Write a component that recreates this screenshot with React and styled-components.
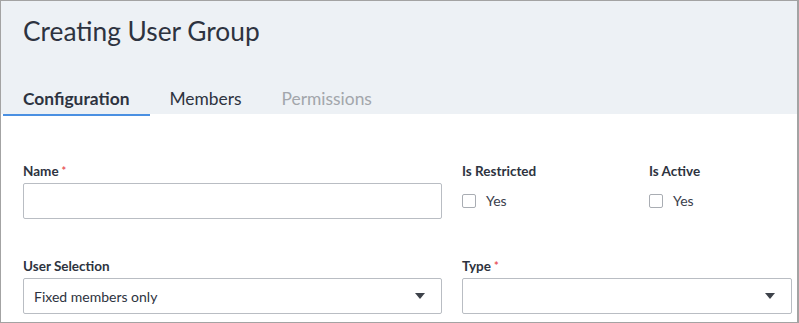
import React from 'react'
import styled, {createGlobalStyle} from 'styled-components'

const GlobalStyle = createGlobalStyle`
  html, body {
    margin: 0;
    padding: 0;
    background: #ffffff;
  }
  body {
    font-family: Lato, "Open Sans", sans-serif;
    color: #2d3340;
  }
`

const App = () => {
    return (
        <Frame>
            <GlobalStyle/>
            <Header>
                <Title>Creating User Group</Title>
                <Tabs>
                    <Tab active>Configuration</Tab>
                    <Tab>Members</Tab>
                    <Tab disabled>Permissions</Tab>
                </Tabs>
            </Header>
            <Form>
                <Field>
                    <Label>Name<Required>*</Required></Label>
                    <Input type="text"/>
                </Field>
                <Field>
                    <Label>Is Restricted</Label>
                    <CheckRow>
                        <Box/>
                        <span>Yes</span>
                    </CheckRow>
                </Field>
                <Field>
                    <Label>Is Active</Label>
                    <CheckRow>
                        <Box/>
                        <span>Yes</span>
                    </CheckRow>
                </Field>
                <Field>
                    <Label>User Selection</Label>
                    <Select>
                        <span>Fixed members only</span>
                        <Caret/>
                    </Select>
                </Field>
                <Field span={2}>
                    <Label>Type<Required>*</Required></Label>
                    <Select>
                        <span/>
                        <Caret/>
                    </Select>
                </Field>
            </Form>
        </Frame>
    )
}

export default App

const Frame = styled.div`
  box-sizing: border-box;
  width: 799px;
  height: 323px;
  border: 1px solid #a3a3a3;
  border-right-width: 2px;
  overflow: hidden;
  background: #ffffff;
`

const Header = styled.div`
  background: #edf1f5;
  padding: 0 0 0 2px;
  height: 113px;
  box-sizing: border-box;
  display: flex;
  flex-direction: column;
`

const Title = styled.h1`
  margin: 0;
  padding: 14px 0 0 20px;
  font-size: 26.3px;
  font-weight: 400;
  line-height: 32px;
  color: #2d3340;
`

const Tabs = styled.div`
  display: flex;
  margin-top: auto;
`

const Tab = styled.div`
  padding: 0 21px 0 20px;
  height: 26px;
  font-size: 17.4px;
  line-height: 21px;
  font-weight: ${props => props.active ? 700 : 400};
  color: ${props => props.disabled ? '#a2a6ab' : '#2d3340'};
  border-bottom: 2px solid ${props => props.active ? '#4a90e2' : 'transparent'};
  margin-bottom: -2px;
  margin-right: -1px;
  position: relative;
`

const Form = styled.div`
  display: grid;
  grid-template-columns: 419px 167px 143px;
  column-gap: 20px;
  row-gap: 39px;
  padding: 49px 0 0 22px;
`

const Field = styled.div`
  display: flex;
  flex-direction: column;
  grid-column: span ${props => props.span || 1};
`

const Label = styled.div`
  font-size: 13.5px;
  font-weight: 700;
  line-height: 16px;
  color: #2d3340;
  margin-bottom: 4px;
`

const Required = styled.span`
  color: #e8545a;
  margin-left: 3px;
  font-size: 11px;
  vertical-align: top;
`

const Input = styled.input`
  box-sizing: border-box;
  height: 36px;
  width: 100%;
  border: 1px solid #b9bdc3;
  border-radius: 2px;
  background: #fff;
  outline: none;
  font-family: inherit;
`

const CheckRow = styled.label`
  display: flex;
  align-items: center;
  gap: 10px;
  margin-top: 9px;
  font-size: 14px;
  color: #3a404b;
`

const Box = styled.span`
  box-sizing: border-box;
  width: 14px;
  height: 14px;
  border: 1px solid #a9adb3;
  border-radius: 2px;
  background: #fff;
`

const Select = styled.div`
  box-sizing: border-box;
  height: 36px;
  border: 1px solid #b9bdc3;
  border-radius: 2px;
  display: flex;
  align-items: center;
  justify-content: space-between;
  padding: 0 16px 0 10px;
  font-size: 14px;
  color: #2d3340;
`

const Caret = styled.span`
  width: 0;
  height: 0;
  border-left: 5px solid transparent;
  border-right: 5px solid transparent;
  border-top: 6px solid #3d424a;
`
